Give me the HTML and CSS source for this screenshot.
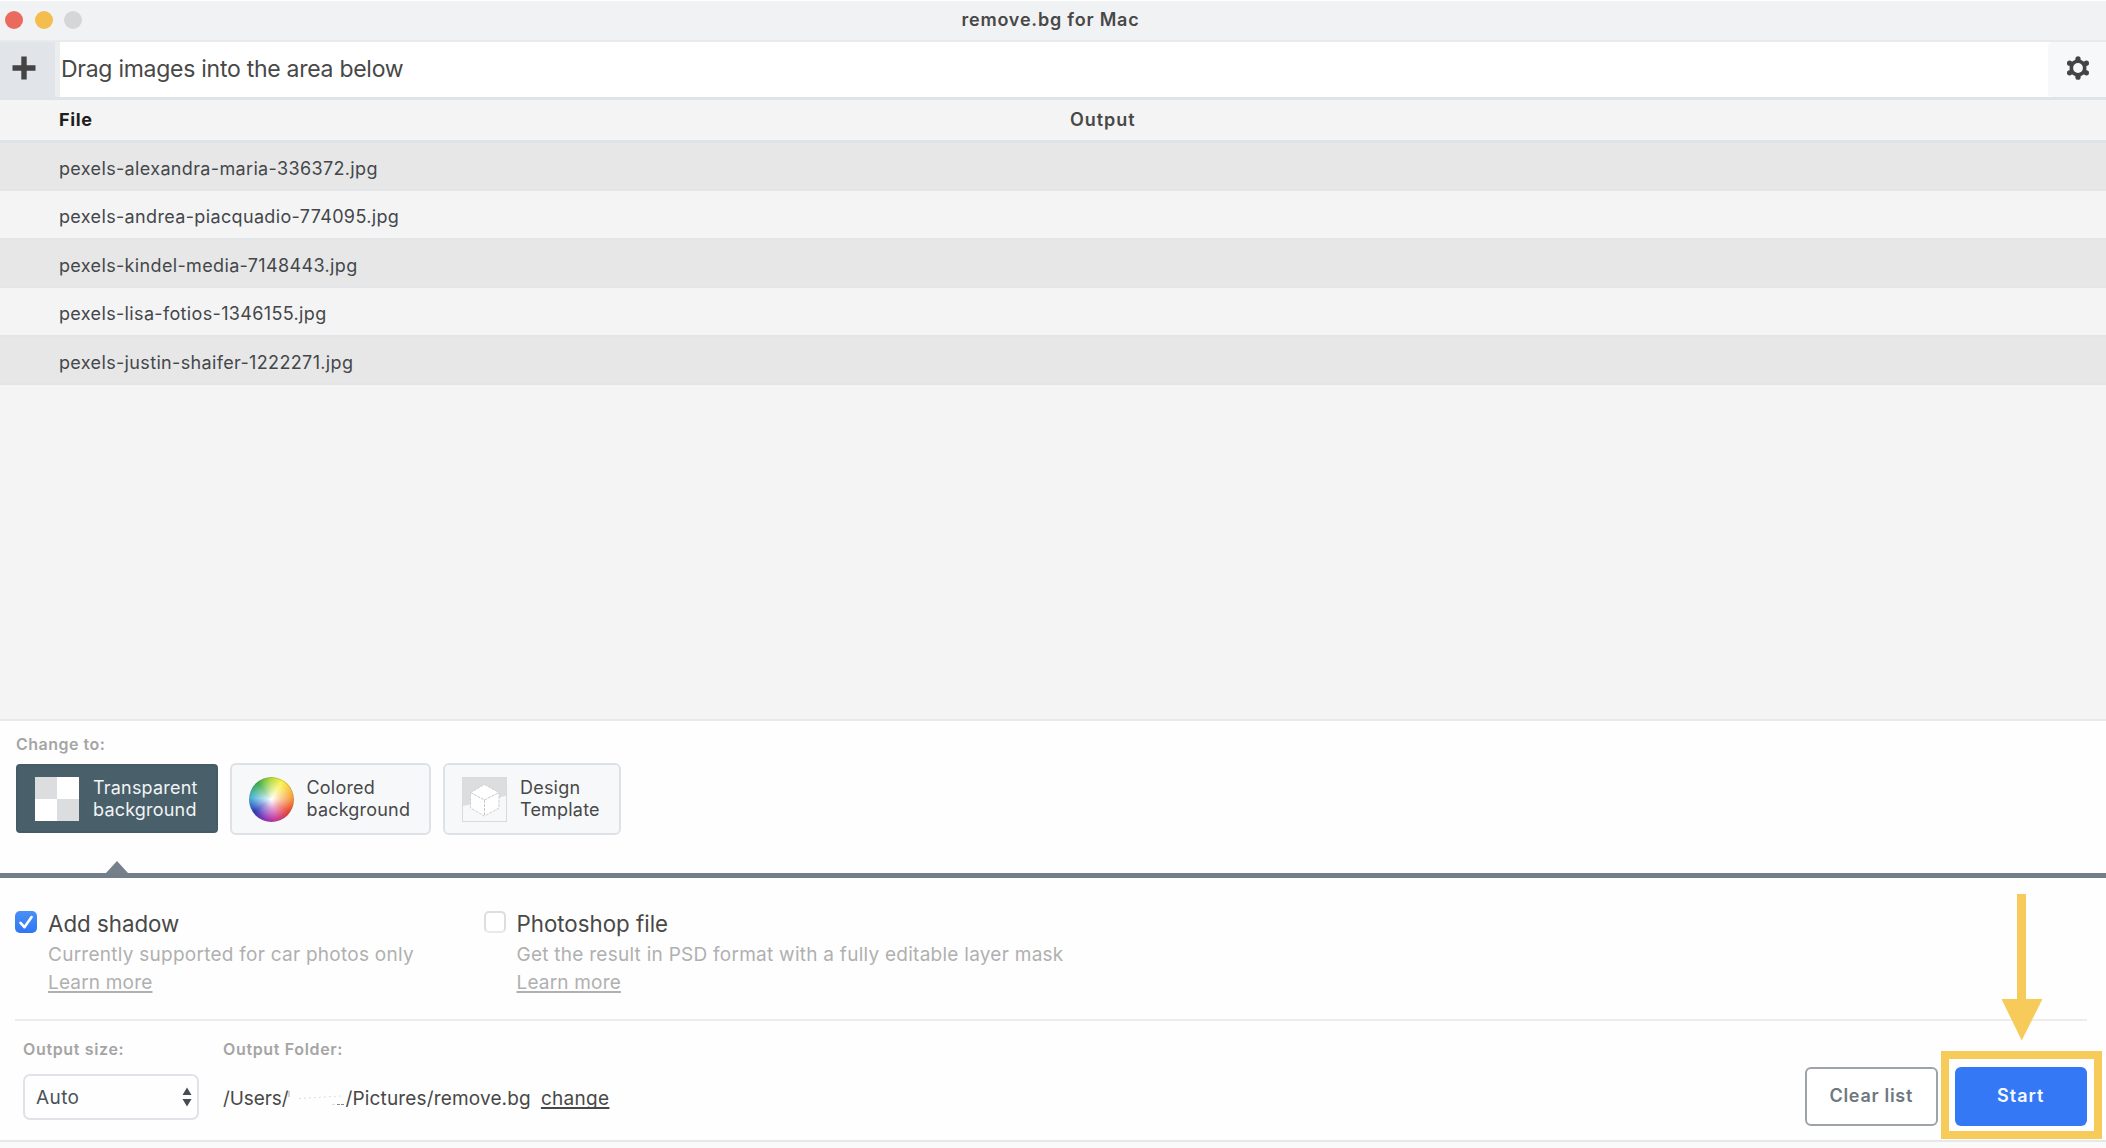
FILE: index.html
```
<!DOCTYPE html>
<html lang="en">
<head>
    <meta charset="UTF-8">
    <meta name="viewport" content="width=device-width, initial-scale=1.0">
    <title>remove.bg for Mac</title>
    <link rel="stylesheet" href="styles.css">
</head>
<body>

    <div class="window">
        <header class="titlebar">
            <div class="lights">
                <span class="light red"></span>
                <span class="light yellow"></span>
                <span class="light gray"></span>
            </div>
            <h1>remove.bg for Mac</h1>
        </header>

        <div class="toolbar">
            <button class="add-btn" aria-label="Add">
                <svg width="24" height="24" viewBox="0 0 24 24"><path d="M9.3 0.5h5.4v8.8h8.8v5.4h-8.8v8.8H9.3v-8.8H0.5V9.3h8.8z" fill="#444"/></svg>
            </button>
            <p>Drag images into the area below</p>
            <button class="settings-btn" aria-label="Settings">
                <svg width="24" height="24" viewBox="0 0 24 24">
                    <path d="M12 4.6l6.4 3.7v7.4L12 19.4l-6.4-3.7V8.3z" fill="#444" stroke="#444" stroke-width="4" stroke-linejoin="round"/>
                    <g fill="#444">
                        <circle cx="12" cy="2.8" r="2.6"/><circle cx="12" cy="21.2" r="2.6"/>
                        <circle cx="3.6" cy="7.2" r="2.6"/><circle cx="20.4" cy="7.2" r="2.6"/>
                        <circle cx="3.6" cy="16.8" r="2.6"/><circle cx="20.4" cy="16.8" r="2.6"/>
                    </g>
                    <circle cx="12" cy="12" r="4.9" fill="#f7f8fa"/>
                </svg>
            </button>
        </div>

        <div class="list">
            <div class="list-head"><span class="col-file">File</span><span>Output</span></div>
            <div class="row">pexels-alexandra-maria-336372.jpg</div>
            <div class="row">pexels-andrea-piacquadio-774095.jpg</div>
            <div class="row">pexels-kindel-media-7148443.jpg</div>
            <div class="row">pexels-lisa-fotios-1346155.jpg</div>
            <div class="row">pexels-justin-shaifer-1222271.jpg</div>
        </div>

        <section class="change">
            <h2 class="label">Change to:</h2>
            <div class="cards">
                <button class="card active">
                    <span class="checker"></span>
                    <span>Transparent<br>background</span>
                </button>
                <button class="card">
                    <span class="wheel"></span>
                    <span>Colored<br>background</span>
                </button>
                <button class="card">
                    <svg class="cube" width="45" height="45" viewBox="0 0 45 45">
                        <path d="M0.5 0.5h44V19C38 19 35 24 28 24S12 27 0.5 29z" fill="#dcddde"/>
                        <rect x="0.5" y="0.5" width="44" height="44" fill="none" stroke="#d9dadc"/>
                        <path d="M22.5 7.5L37 15.5V31L22.5 39L8.5 31V15.5z" fill="#fff" stroke="#cfd0d1" stroke-dasharray="3 1"/>
                        <path d="M8.5 15.5L22.5 23L37 15.5M22.5 23V39" fill="none" stroke="#c8c9ca" stroke-dasharray="3 1"/>
                    </svg>
                    <span>Design<br>Template</span>
                </button>
            </div>
            <svg class="pointer" width="22" height="12" viewBox="0 0 22 12"><path d="M11 0L22 12H0z" fill="#76808a"/></svg>
        </section>

        <section class="options">
            <div class="option">
                <span class="checkbox checked">
                    <svg width="22" height="22" viewBox="0 0 22 22"><path d="M5.500 11.800L9.400 16.200L16.600 6" fill="none" stroke="#fff" stroke-width="2.6" stroke-linecap="round" stroke-linejoin="round"/></svg>
                </span>
                <div>
                    <h3>Add shadow</h3>
                    <p>Currently supported for car photos only</p>
                    <a>Learn more</a>
                </div>
            </div>
            <div class="option">
                <span class="checkbox"></span>
                <div>
                    <h3>Photoshop file</h3>
                    <p>Get the result in PSD format with a fully editable layer mask</p>
                    <a>Learn more</a>
                </div>
            </div>
        </section>

        <footer class="footer">
            <div class="size">
                <span class="label">Output size:</span>
                <div class="select">
                    <span>Auto</span>
                    <svg width="10" height="20" viewBox="0 0 10 20"><path d="M5 0.5L9.500 8H0.500zM0.500 12h9L5 19.500z" fill="#454c54"/></svg>
                </div>
            </div>
            <div class="folder">
                <span class="label">Output Folder:</span>
                <div class="path">
                    <span class="users">/Users/</span>
                    <svg class="hidden-name" width="57" height="20" viewBox="0 0 57 20">
                        <path d="M1 2v6" stroke="#aaa"/>
                        <path d="M11 9.500L53 7" stroke="#ddd" stroke-dasharray="2 3"/>
                        <path d="M44 15.500h3" stroke="#ddd"/>
                        <path d="M49 15.500h3M53 15.500h3" stroke="#888"/>
                    </svg>
                    <span>/Pictures/remove.bg</span>
                    <a>change</a>
                </div>
            </div>
            <div class="actions">
                <button class="btn clear">Clear list</button>
                <button class="btn start">Start</button>
            </div>
        </footer>

        <!-- callout for the Start button -->
        <svg class="arrow" width="42" height="147" viewBox="0 0 42 147"><path d="M16 0h9v105h16.500L20.700 146.500L0.500 105H16z" fill="#f6cb59"/></svg>
        <div class="highlight"></div>
    </div>

</body>
</html>
```
FILE: styles.css
```
* {
    box-sizing: border-box;
}

body {
    margin: 0;
    font-family: Inter, "Liberation Sans", sans-serif;
    color: #484848;
    background: #fafafa;
}

h1, h2, h3, p {
    margin: 0;
    font-weight: 400;
}

button {
    font-family: inherit;
    padding: 0;
    border: 0;
    color: inherit;
}

.window {
    position: relative;
    display: flex;
    flex-direction: column;
    height: 1142px;
    border-top: 1px solid #fff;
    border-bottom: 2px solid #e7e7e8;
    background: #fefefe;
}

/* Title bar */
.titlebar {
    display: grid;
    grid-template-columns: 1fr auto 1fr;
    align-items: center;
    height: 41px;
    padding: 0 5px 1px;
    background: #f1f2f4;
    border-bottom: 2px solid #e9eaeb;
}

.titlebar h1 {
    font-size: 18px;
    font-weight: 600;
    line-height: 22px;
    letter-spacing: 0.8px;
    margin-right: 5px;
}

.lights {
    display: flex;
    gap: 11.5px;
}

.light {
    width: 18px;
    height: 18px;
    border-radius: 50%;
}

.red { background: #eb6a5e; }
.yellow { background: #f3be4e; }
.gray { background: #d5d6d8; }

/* Toolbar */
.toolbar {
    display: flex;
    height: 58px;
    background: #fff;
    border-bottom: 3px solid #e0e3e7;
}

.add-btn {
    width: 60px;
    padding: 0 7px 4px 0;
    background: #e1e5e9;
    border-right: 5px solid #ebedee;
}

.add-btn svg,
.settings-btn svg {
    display: block;
    margin: 0 auto;
}

.toolbar p {
    flex: 1;
    padding-left: 1px;
    font-size: 23px;
    line-height: 55px;
    letter-spacing: -0.27px;
}

.settings-btn {
    width: 58px;
    padding: 0 0 4px 2px;
    border-radius: 4px 0 0 4px;
    background: #f7f8fa;
}

/* File list */
.list {
    flex: none;
    height: 621px;
    background: #f4f4f4;
    border-bottom: 2px solid #e9e9e9;
}

.list-head {
    display: grid;
    grid-template-columns: 1011px 1fr;
    align-items: center;
    height: 43px;
    padding: 0 0 1px 59px;
    font-size: 18px;
    font-weight: 600;
    letter-spacing: 0.95px;
    border-bottom: 3px solid #dfe2e6;
}

.col-file {
    font-weight: 700;
    letter-spacing: 0.65px;
    color: #1c1e20;
}

.row {
    height: 48.4px;
    padding: 2px 0 0 59px;
    font-size: 18px;
    line-height: 48px;
    letter-spacing: 0.35px;
    color: #43474b;
    border-bottom: 2px solid #e3e6e9;
}

.row:nth-child(even) {
    background: #e7e7e7;
}

/* Background choices */
.change {
    position: relative;
    height: 157px;
    padding: 13px 16px 0;
    border-bottom: 5px solid #737e88;
}

.label {
    display: block;
    font-size: 16px;
    font-weight: 600;
    line-height: 20px;
    letter-spacing: 0.65px;
    color: #a5a5a5;
}

.change .label {
    letter-spacing: 0.5px;
}

.cards {
    display: flex;
    gap: 12px;
    margin-top: 9px;
}

.card {
    display: flex;
    align-items: center;
    gap: 13px;
    height: 72px;
    padding: 0 17px;
    text-align: left;
    font-size: 18px;
    line-height: 22px;
    letter-spacing: 0.2px;
    background: #f7f8fa;
    border: 2px solid #dee2e6;
    border-radius: 6px;
}

.card:nth-child(-n+2) {
    width: 201.5px;
}

.card:last-child {
    width: 178px;
}

.card.active {
    gap: 14px;
    height: 69px;
    margin-top: 1px;
    color: #f1f4f5;
    background: #495f69;
    border-color: #445b68;
    border-radius: 4px;
}

.checker {
    width: 44px;
    height: 44px;
    background: conic-gradient(#fff 25%, #dcdddf 0 50%, #fff 0 75%, #dcdddf 0);
}

.wheel {
    width: 45px;
    height: 45px;
    border-radius: 50%;
    box-shadow: inset 0 0 0 1px rgba(90, 90, 90, 0.25);
    background:
        radial-gradient(circle closest-side, #fff 0, rgba(255, 255, 255, 0.5) 40%, rgba(255, 255, 255, 0) 90%),
        conic-gradient(#b9dc40, #fbf34a 30deg, #f5a03c 85deg, #ea4531 125deg, #c839a0 170deg, #8b35b8 200deg, #2b3cb8 235deg, #4fb5dc 275deg, #3fae49 320deg, #b9dc40);
}

.pointer {
    position: absolute;
    left: 106px;
    bottom: 0;
}

/* Options */
.options {
    display: grid;
    grid-template-columns: 468.5px 1fr;
    height: 143px;
    margin: 0 19px 0 15px;
    padding-top: 32px;
    border-bottom: 2px solid #ececed;
}

.option {
    display: flex;
    gap: 11px;
}

.checkbox {
    flex: none;
    width: 22px;
    height: 22px;
    margin-top: 1px;
    border: 2px solid #dedede;
    border-bottom-color: #e9e9e9;
    border-radius: 5px;
    background: #fff;
}

.checkbox.checked {
    border: 0;
    background: linear-gradient(#4a90f7, #2f76f2);
}

.checkbox svg {
    display: block;
}

.option h3 {
    font-size: 22.3px;
    line-height: 27px;
    margin-bottom: 4px;
}

.option p,
.option a {
    display: block;
    font-size: 19px;
    line-height: 28px;
    letter-spacing: 0.26px;
    color: #b0b0b0;
}

.option a {
    width: fit-content;
    line-height: 27px;
    letter-spacing: 0.18px;
    text-decoration: underline 2px;
    text-underline-offset: 2px;
}

/* Output settings */
.footer {
    display: flex;
    height: 118px;
    padding: 18px 19px 0 23px;
}

.size {
    width: 200px;
}

.select {
    display: flex;
    justify-content: space-between;
    align-items: center;
    width: 176px;
    height: 46px;
    margin-top: 15px;
    padding: 0 5px 0 11px;
    font-size: 19px;
    letter-spacing: 0.4px;
    color: #4b525a;
    border: 2px solid #dfe3e8;
    border-radius: 7px;
}

.path {
    display: flex;
    margin-top: 26px;
    font-size: 19px;
    line-height: 28px;
    letter-spacing: 0.16px;
}

.path .users {
    letter-spacing: -0.1px;
}

.path .hidden-name {
    margin-top: 4px;
}

.path a {
    margin-left: 10px;
    letter-spacing: 0.3px;
    text-decoration: underline 2px;
    text-underline-offset: 2px;
    text-decoration-skip-ink: none;
}

.actions {
    display: flex;
    gap: 17px;
    margin: 28px 0 0 auto;
}

.btn {
    width: 132.5px;
    height: 59px;
    padding-bottom: 2px;
    font-size: 18px;
    font-weight: 600;
    letter-spacing: 0.7px;
    border-radius: 6px;
}

.clear {
    color: #6f7880;
    background: #fff;
    border: 2px solid #9da3a9;
}

.start {
    color: #f4f8ff;
    letter-spacing: 1px;
    background: #3478f6;
}

/* Callout */
.arrow {
    position: absolute;
    left: 2001px;
    top: 893px;
}

.highlight {
    position: absolute;
    left: 1941px;
    top: 1050px;
    width: 161px;
    height: 88px;
    border: 8px solid #f6cb59;
}
```
